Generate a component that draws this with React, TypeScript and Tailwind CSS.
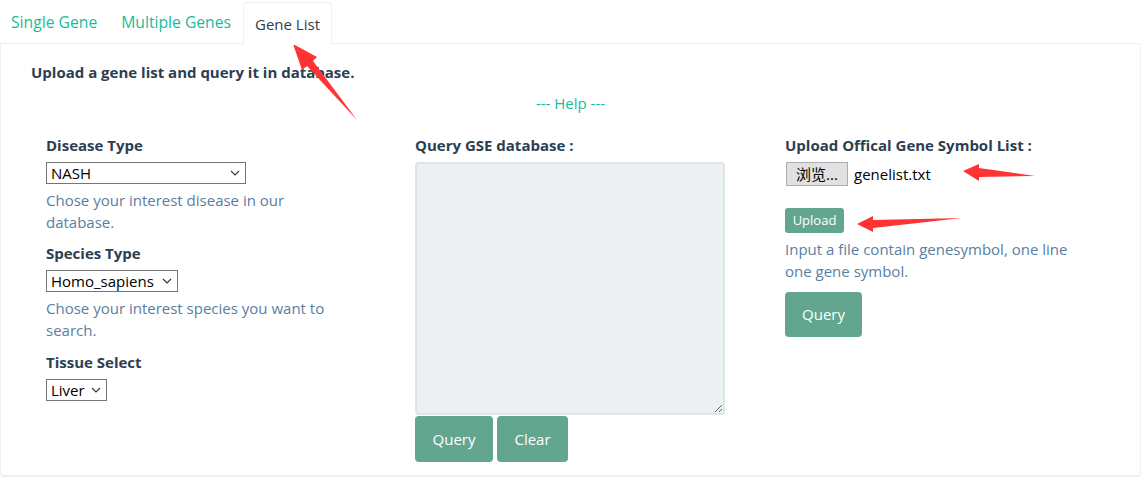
import React from 'react';

const font = { fontFamily: '"Open Sans", "Noto Sans CJK SC", sans-serif' };

function Chevron() {
  return (
    <svg width="10" height="6" viewBox="0 0 10 6" className="ml-auto">
      <path d="M1 1l4 4 4-4" fill="none" stroke="#333" strokeWidth="1.1" />
    </svg>
  );
}

function FakeSelect({ value, width }: { value: string; width: string }) {
  return (
    <div className={`flex items-center h-[22px] border border-[#767676] bg-white pl-[4px] pr-[5px] text-[15px] text-black leading-none ${width}`}>
      <span>{value}</span>
      <Chevron />
    </div>
  );
}

export default function App() {
  return (
    <div className="relative w-[1143px] h-[479px] bg-white text-[15px] text-[#2c3e50]" style={font}>
      {/* Tabs */}
      <ul className="flex h-[44px] pt-[2px] -ml-[1px] text-[15.7px]">
        <li className="px-3 flex items-center text-[#18bc9c]">Single Gene</li>
        <li className="px-3 flex items-center text-[#18bc9c]">Multiple Genes</li>
        <li className="px-[11px] flex items-center bg-white border border-b-0 border-[#ecf0f1] rounded-t relative z-10 h-[43px] text-[15px]">
          Gene List
        </li>
      </ul>

      {/* Panel */}
      <div className="-mt-[1px] w-[1141px] h-[434px] border border-b-2 border-[#ecf0f1] rounded-b">
        <div className="px-[30px] pt-[17px]">
          <h4 className="font-bold leading-[22px]">Upload a gene list and query it in database.</h4>
          <p className="text-center text-[#18bc9c] leading-[22px] mt-[9px]">--- Help ---</p>

          <div className="grid grid-cols-[370px_370px_370px] mt-[20px]">
            {/* Column 1 */}
            <div className="px-[15px]">
              <label className="block font-bold leading-[22px] mb-[6px]">Disease Type</label>
              <FakeSelect value="NASH" width="w-[200px]" />
              <p className="text-[#597ea2] leading-[22px] mt-[5px] mb-[9px] w-[300px]">Chose your interest disease in our database.</p>
              <label className="block font-bold leading-[22px] mb-[6px]">Species Type</label>
              <FakeSelect value="Homo_sapiens" width="w-[132px]" />
              <p className="text-[#597ea2] leading-[22px] mt-[5px] mb-[10px] w-[300px]">Chose your interest species you want to search.</p>
              <label className="block font-bold leading-[22px] mb-[6px]">Tissue Select</label>
              <FakeSelect value="Liver" width="w-[61px]" />
            </div>

            {/* Column 2 */}
            <div className="px-[15px]">
              <label className="block font-bold leading-[22px] mb-[6px] -ml-px">Query GSE database :</label>
              <textarea className="block -ml-px w-[310px] h-[253px] bg-[#ecf0f1] border-2 border-[#dce4ec] rounded" />
              <div className="flex gap-[4px] mt-[1px] -ml-px">
                <button className="h-[46px] w-[78px] rounded bg-[#62a690] text-white">Query</button>
                <button className="h-[46px] w-[71px] rounded bg-[#62a690] text-white">Clear</button>
              </div>
            </div>

            {/* Column 3 */}
            <div className="px-[15px]">
              <label className="block font-bold leading-[22px] mb-[6px] -ml-px">Upload Offical Gene Symbol List :</label>
              <div className="flex items-center h-[24px]">
                <span className="h-[24px] w-[62px] flex items-center justify-center bg-[#e1e1e1] border border-[#adadad] text-[15px] text-black">
                  浏览...
                </span>
                <span className="ml-[6px] text-black">genelist.txt</span>
              </div>
              <button className="mt-[22px] -ml-px h-[25px] w-[59px] rounded-[3px] bg-[#62a690] text-white text-[13px]">Upload</button>
              <p className="text-[#597ea2] leading-[22px] mt-[5px] -ml-px w-[300px]">Input a file contain genesymbol, one line one gene symbol.</p>
              <button className="mt-[10px] -ml-px h-[45px] w-[77px] rounded bg-[#62a690] text-white">Query</button>
            </div>
          </div>
        </div>
      </div>

      {/* Red annotation arrows */}
      <svg className="absolute inset-0 pointer-events-none" width="1143" height="479">
        <polygon points="293,44 317,57 313,61 357,120 307,66 302,70" fill="#f33" />
        <polygon points="963,171 979,164 979,168 1035,176 979,177 979,181" fill="#f33" />
        <polygon points="857,224 873,216 873,220 962,218 873,228 873,232" fill="#f33" />
      </svg>
    </div>
  );
}
